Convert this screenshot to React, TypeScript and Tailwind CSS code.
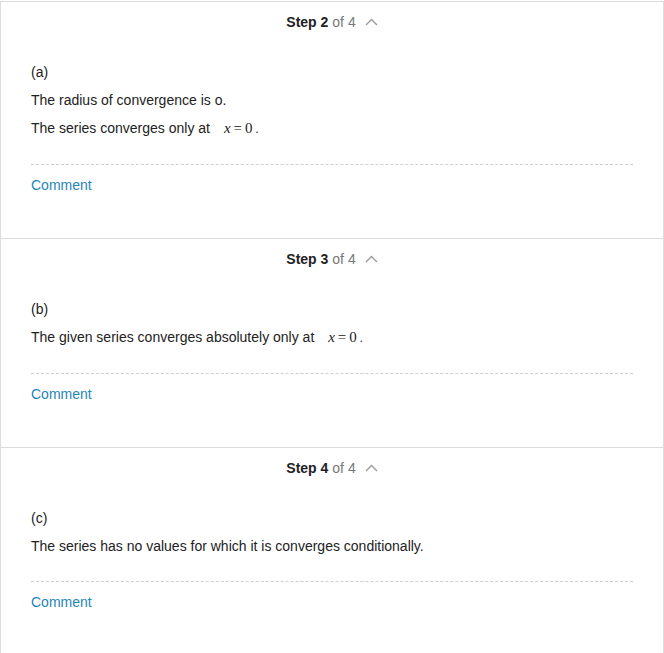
import { ReactNode } from "react";

interface StepData {
  step: number;
  total: number;
  label: string;
  lines: ReactNode[];
}

function MathZero() {
  return (
    <span className="ml-[10px] font-['Liberation_Serif',serif] text-[15px] text-[#222]">
      <i>x</i>
      <span className="mx-[3px]">=</span>0<span className="ml-[3px] text-[12px]">.</span>
    </span>
  );
}

const STEPS: StepData[] = [
  {
    step: 2,
    total: 4,
    label: "(a)",
    lines: [
      "The radius of convergence is o.",
      <>
        The series converges only at <MathZero />
      </>,
    ],
  },
  {
    step: 3,
    total: 4,
    label: "(b)",
    lines: [
      <>
        The given series converges absolutely only at <MathZero />
      </>,
    ],
  },
  {
    step: 4,
    total: 4,
    label: "(c)",
    lines: ["The series has no values for which it is converges conditionally."],
  },
];

function ChevronUp() {
  return (
    <svg width="13" height="8" viewBox="0 0 13 8" fill="none" className="ml-[9px]">
      <path d="M1 7L6.5 1.5L12 7" stroke="#9a9a9a" strokeWidth="1.4" />
    </svg>
  );
}

function StepCard({ data }: { data: StepData }) {
  return (
    <div className="border-t border-[#dcdcdc]">
      {/* Header */}
      <div className="flex h-10 items-center justify-center text-[14px]">
        <span className="font-bold text-[#222]">Step {data.step}</span>
        <span className="ml-1 text-[#777]">of {data.total}</span>
        <ChevronUp />
      </div>

      {/* Body */}
      <div className="px-[30px] pb-[42px]">
        <p className="mt-5 leading-5">{data.label}</p>
        {data.lines.map((line, i) => (
          <p key={i} className="mt-2 leading-5">
            {line}
          </p>
        ))}
        <div className="mt-[25px] border-t border-dashed border-[#cfcfcf] pt-[10px]">
          <a className="leading-5 text-[#1f86b5]">Comment</a>
        </div>
      </div>
    </div>
  );
}

export default function App() {
  return (
    <div className="min-h-[653px] bg-white pt-px font-['Liberation_Sans',Arial,sans-serif] text-[14px] text-[#222]">
      <div className="border-x border-b border-[#dcdcdc]">
        {STEPS.map((s) => (
          <StepCard key={s.step} data={s} />
        ))}
      </div>
    </div>
  );
}
